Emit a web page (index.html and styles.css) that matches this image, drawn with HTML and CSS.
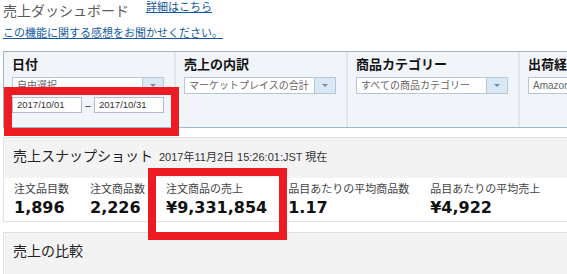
FILE: index.html
```html
<!DOCTYPE html>
<html lang="ja">
<head>
<meta charset="utf-8">
<title>売上ダッシュボード</title>
<link rel="stylesheet" href="styles.css">
</head>
<body>
<div class="page">
  <header class="head">
    <div class="head-row">
      <h1 class="title">売上ダッシュボード</h1>
      <a class="link detail" href="#">詳細はこちら</a>
    </div>
    <a class="link feedback" href="#">この機能に関する感想をお聞かせください。</a>
  </header>

  <div class="filters">
    <div class="fcol">
      <div class="flabel">日付</div>
      <div class="select"><span class="sel-box">自由選択</span><span class="sel-btn"><span class="tri"></span></span></div>
      <div class="dates"><span class="date">2017/10/01</span><span class="dash">–</span><span class="date">2017/10/31</span></div>
    </div>
    <div class="fcol">
      <div class="flabel">売上の内訳</div>
      <div class="select"><span class="sel-box">マーケットプレイスの合計</span><span class="sel-btn"><span class="tri"></span></span></div>
    </div>
    <div class="fcol">
      <div class="flabel">商品カテゴリー</div>
      <div class="select"><span class="sel-box">すべての商品カテゴリー</span><span class="sel-btn"><span class="tri"></span></span></div>
    </div>
    <div class="fcol">
      <div class="flabel">出荷経路</div>
      <div class="select"><span class="sel-box">Amazonおよび出品者</span><span class="sel-btn"><span class="tri"></span></span></div>
    </div>
  </div>

  <section class="snapshot">
    <div class="snap-head">
      <h2 class="sec-title">売上スナップショット</h2>
      <span class="ts">2017年11月2日 15:26:01:JST 現在</span>
    </div>
    <div class="metrics">
      <div class="metric"><div class="m-label">注文品目数</div><div class="m-value">1,896</div></div>
      <div class="metric"><div class="m-label">注文商品数</div><div class="m-value">2,226</div></div>
      <div class="metric"><div class="m-label">注文商品の売上</div><div class="m-value">¥9,331,854</div></div>
      <div class="metric"><div class="m-label">品目あたりの平均商品数</div><div class="m-value">1.17</div></div>
      <div class="metric"><div class="m-label">品目あたりの平均売上</div><div class="m-value">¥4,922</div></div>
    </div>
  </section>

  <section class="compare">
    <h2 class="sec-title">売上の比較</h2>
  </section>

  <div class="mark mark-date"></div>
  <div class="mark mark-sales"></div>
</div>
</body>
</html>
```

FILE: styles.css
```css
html, body {
  margin: 0;
  padding: 0;
  background: #fff;
  overflow: hidden;
}
body {
  width: 567px;
  height: 274px;
  font-family: "Liberation Sans", "Noto Sans CJK JP", sans-serif;
  color: #333;
}
.page {
  position: relative;
  padding-left: 3px;
}

/* header */
.head-row {
  display: flex;
  align-items: flex-start;
  height: 26px;
}
.title {
  margin: 0;
  padding-top: 2px;
  font-size: 14px;
  line-height: 18px;
  font-weight: normal;
  color: #5a5a5a;
}
.link {
  color: #14599f;
  text-decoration: underline;
  font-size: 11px;
  line-height: 14px;
}
.detail {
  margin-left: 17px;
}
.feedback {
  display: block;
  width: max-content;
}

/* filter panel */
.filters {
  display: flex;
  width: 800px;
  height: 75px;
  margin-top: 11px;
  border: 1px solid #a3b5c8;
  background: #f1f4f9;
}
.fcol {
  width: 172px;
  box-sizing: border-box;
  padding: 5px 8px 0;
  border-right: 2px solid #e1e6ed;
}
.flabel {
  font-size: 13px;
  line-height: 16px;
  font-weight: bold;
  color: #111;
}
.select {
  display: flex;
  margin-top: 4px;
  height: 17px;
}
.sel-box {
  width: 131px;
  box-sizing: border-box;
  border: 1px solid #b9c5d2;
  background: #fff;
  font-size: 10px;
  line-height: 15px;
  color: #666;
  padding-left: 4px;
  white-space: nowrap;
  overflow: hidden;
}
.sel-btn {
  width: 21px;
  box-sizing: border-box;
  border: 1px solid #b4c8dc;
  border-left: none;
  background: #dae7f4;
  display: flex;
  align-items: center;
  justify-content: center;
}
.tri {
  width: 0;
  height: 0;
  border-left: 3px solid transparent;
  border-right: 3px solid transparent;
  border-top: 3px solid #6f8fb0;
}
.dates {
  display: flex;
  align-items: center;
  margin-top: 3px;
}
.date {
  width: 70px;
  height: 16px;
  box-sizing: border-box;
  border: 1px solid #aebccb;
  background: #fff;
  font-size: 9.5px;
  line-height: 14px;
  padding-left: 4px;
  color: #333;
}
.dash {
  width: 12px;
  text-align: center;
  font-size: 10px;
  color: #333;
}

/* snapshot */
.snapshot {
  width: 800px;
  margin-top: 9px;
  border: 1px solid #e2e2e2;
}
.snap-head {
  display: flex;
  align-items: baseline;
  height: 40px;
  box-sizing: border-box;
  padding: 9px 9px 0;
  background: #f3f3f3;
}
.sec-title {
  margin: 0;
  font-size: 14px;
  line-height: 18px;
  font-weight: normal;
  color: #222;
}
.ts {
  margin-left: 6px;
  font-size: 11px;
  color: #333;
}
.metrics {
  display: flex;
  gap: 21px;
  height: 43px;
  box-sizing: border-box;
  padding: 5px 10px 0;
  background: #fff;
}
.m-label {
  font-size: 11px;
  line-height: 13px;
  color: #444;
  white-space: nowrap;
}
.m-value {
  margin-top: 2px;
  font-family: "DejaVu Sans", sans-serif;
  font-weight: bold;
  font-size: 16px;
  line-height: 19px;
  color: #111;
  white-space: nowrap;
}

/* compare */
.compare {
  width: 800px;
  height: 60px;
  margin-top: 10px;
  box-sizing: border-box;
  padding: 9px 9px 0;
  border: 1px solid #e2e2e2;
  background: #f3f3f3;
}

/* red highlight overlays */
.mark {
  position: absolute;
  box-sizing: border-box;
  border: 8px solid #ed1c24;
}
.mark-date {
  left: 4px;
  top: 87px;
  width: 175px;
  height: 49px;
}
.mark-sales {
  left: 148px;
  top: 168px;
  width: 139px;
  height: 72px;
}
```
